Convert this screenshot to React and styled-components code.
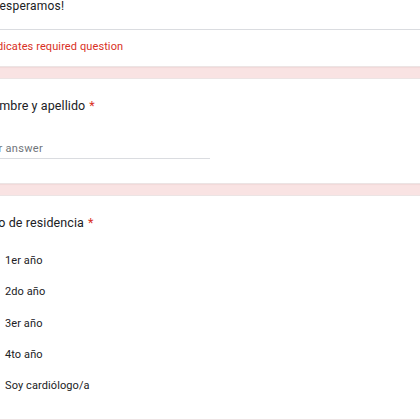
import React from 'react';
import styled, {createGlobalStyle} from 'styled-components';

const Global = createGlobalStyle`
  html, body {
    margin: 0;
    padding: 0;
    background: #f9e3e3;
    overflow: hidden;
  }
  body {
    font-family: Roboto, "Liberation Sans", Arial, sans-serif;
    color: #202124;
  }
`;

const Page = styled.div`
  width: 500px;
  margin: -6px 0 0 -40px;
  display: flex;
  flex-direction: column;
  gap: 11px;
`;

const Card = styled.div`
  background: #fff;
  border: 1px solid #ece4e4;
  border-radius: 8px;
  box-shadow: 0 1px 1px rgba(120, 60, 60, 0.06);
`;

const Description = styled.p`
  margin: 0;
  padding: 0 0 12px 22px;
  font-size: 12px;
  line-height: 22px;
  letter-spacing: 0.2px;
`;

const Divider = styled.hr`
  margin: 0;
  border: none;
  border-top: 1px solid #dadce0;
`;

const Required = styled.div`
  padding: 10px 0 12px 19px;
  font-size: 11px;
  line-height: 14px;
  color: #d93025;
  letter-spacing: 0.1px;
`;

const Question = styled.div`
  padding: 19px 22px ${(p) => p.$bottom}px;
`;

const Title = styled.div`
  font-size: 12.5px;
  line-height: 16px;
  letter-spacing: 0.1px;
`;

const Star = styled.span`
  color: #d93025;
  margin-left: 4px;
`;

const AnswerLine = styled.div`
  margin: 28px 0 0 -4px;
  width: 231px;
  padding-bottom: 2px;
  border-bottom: 1px solid #dadce0;
  font-size: 11px;
  line-height: 14px;
  color: #70757a;
  letter-spacing: 0.3px;
`;

const Options = styled.div`
  margin-top: 22px;
  display: flex;
  flex-direction: column;
  gap: 15.3px;
`;

const Option = styled.label`
  display: flex;
  align-items: center;
  gap: 6px;
  font-size: 11px;
  line-height: 14px;
  letter-spacing: 0.1px;
`;

const Radio = styled.span`
  width: 16px;
  height: 16px;
  border: 2px solid #5f6368;
  border-radius: 50%;
  box-sizing: border-box;
`;

const options = ['1er año', '2do año', '3er año', '4to año', 'Soy cardiólogo/a'];

const App = () => {
  return (
    <>
      <Global />
      <Page>
        <Card>
          <Description>Te esperamos!</Description>
          <Divider />
          <Required>* Indicates required question</Required>
        </Card>
        <Card>
          <Question $bottom={24}>
            <Title>Nombre y apellido<Star>*</Star></Title>
            <AnswerLine>Your answer</AnswerLine>
          </Question>
        </Card>
        <Card>
          <Question $bottom={25}>
            <Title>Año de residencia<Star>*</Star></Title>
            <Options>
              {options.map((o) => (
                <Option key={o}>
                  <Radio />
                  {o}
                </Option>
              ))}
            </Options>
          </Question>
        </Card>
      </Page>
    </>
  );
};

export default App;
